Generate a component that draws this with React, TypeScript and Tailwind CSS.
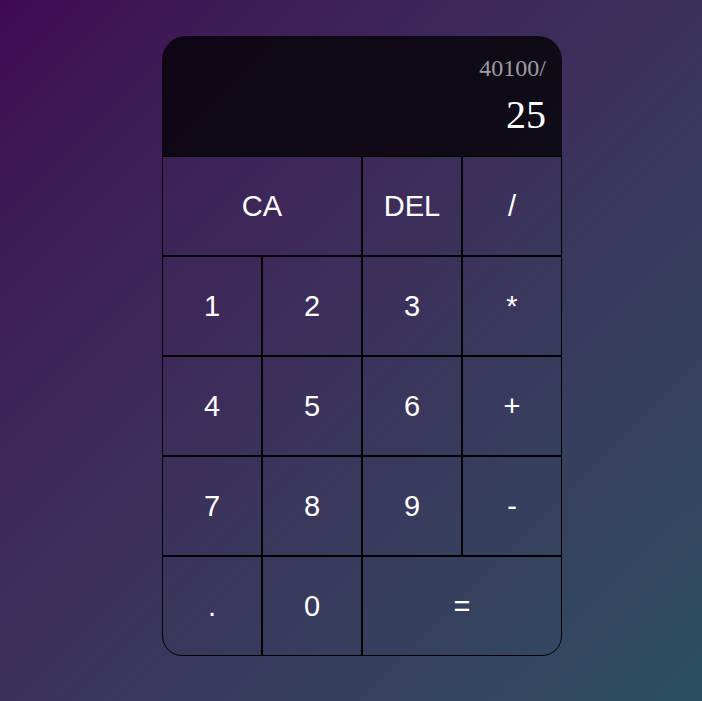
import React from 'react';

const btn =
  'flex h-[100px] items-center justify-center border border-black pt-[2px] text-[29px] text-white';

export default function App() {
  return (
    <div className="flex min-h-screen justify-center bg-gradient-to-br from-[#3f0a54] to-[#2c4f61] pl-[22px] pt-9 font-['Liberation_Sans',Arial,sans-serif]">
      <div className="grid h-[620px] w-[400px] grid-cols-4 grid-rows-[120px_repeat(5,100px)] rounded-t-[24px] rounded-b-[20px]">
        <div className="col-span-4 flex flex-col items-end rounded-t-[24px] bg-black/75 pr-4 pt-5 font-['Liberation_Serif','Times_New_Roman',serif]">
          <div className="text-[24px] leading-[24px] text-white/60">40100/</div>
          <div className="mt-[15px] text-[40px] leading-[40px] text-white">25</div>
        </div>
        <button className={`${btn} col-span-2`}>CA</button>
        <button className={btn}>DEL</button>
        <button className={btn}>/</button>
        <button className={btn}>1</button>
        <button className={btn}>2</button>
        <button className={btn}>3</button>
        <button className={btn}>*</button>
        <button className={btn}>4</button>
        <button className={btn}>5</button>
        <button className={btn}>6</button>
        <button className={btn}>+</button>
        <button className={btn}>7</button>
        <button className={btn}>8</button>
        <button className={btn}>9</button>
        <button className={btn}>-</button>
        <button className={`${btn} rounded-bl-[20px]`}>.</button>
        <button className={btn}>0</button>
        <button className={`${btn} col-span-2 rounded-br-[20px]`}>=</button>
      </div>
    </div>
  );
}
